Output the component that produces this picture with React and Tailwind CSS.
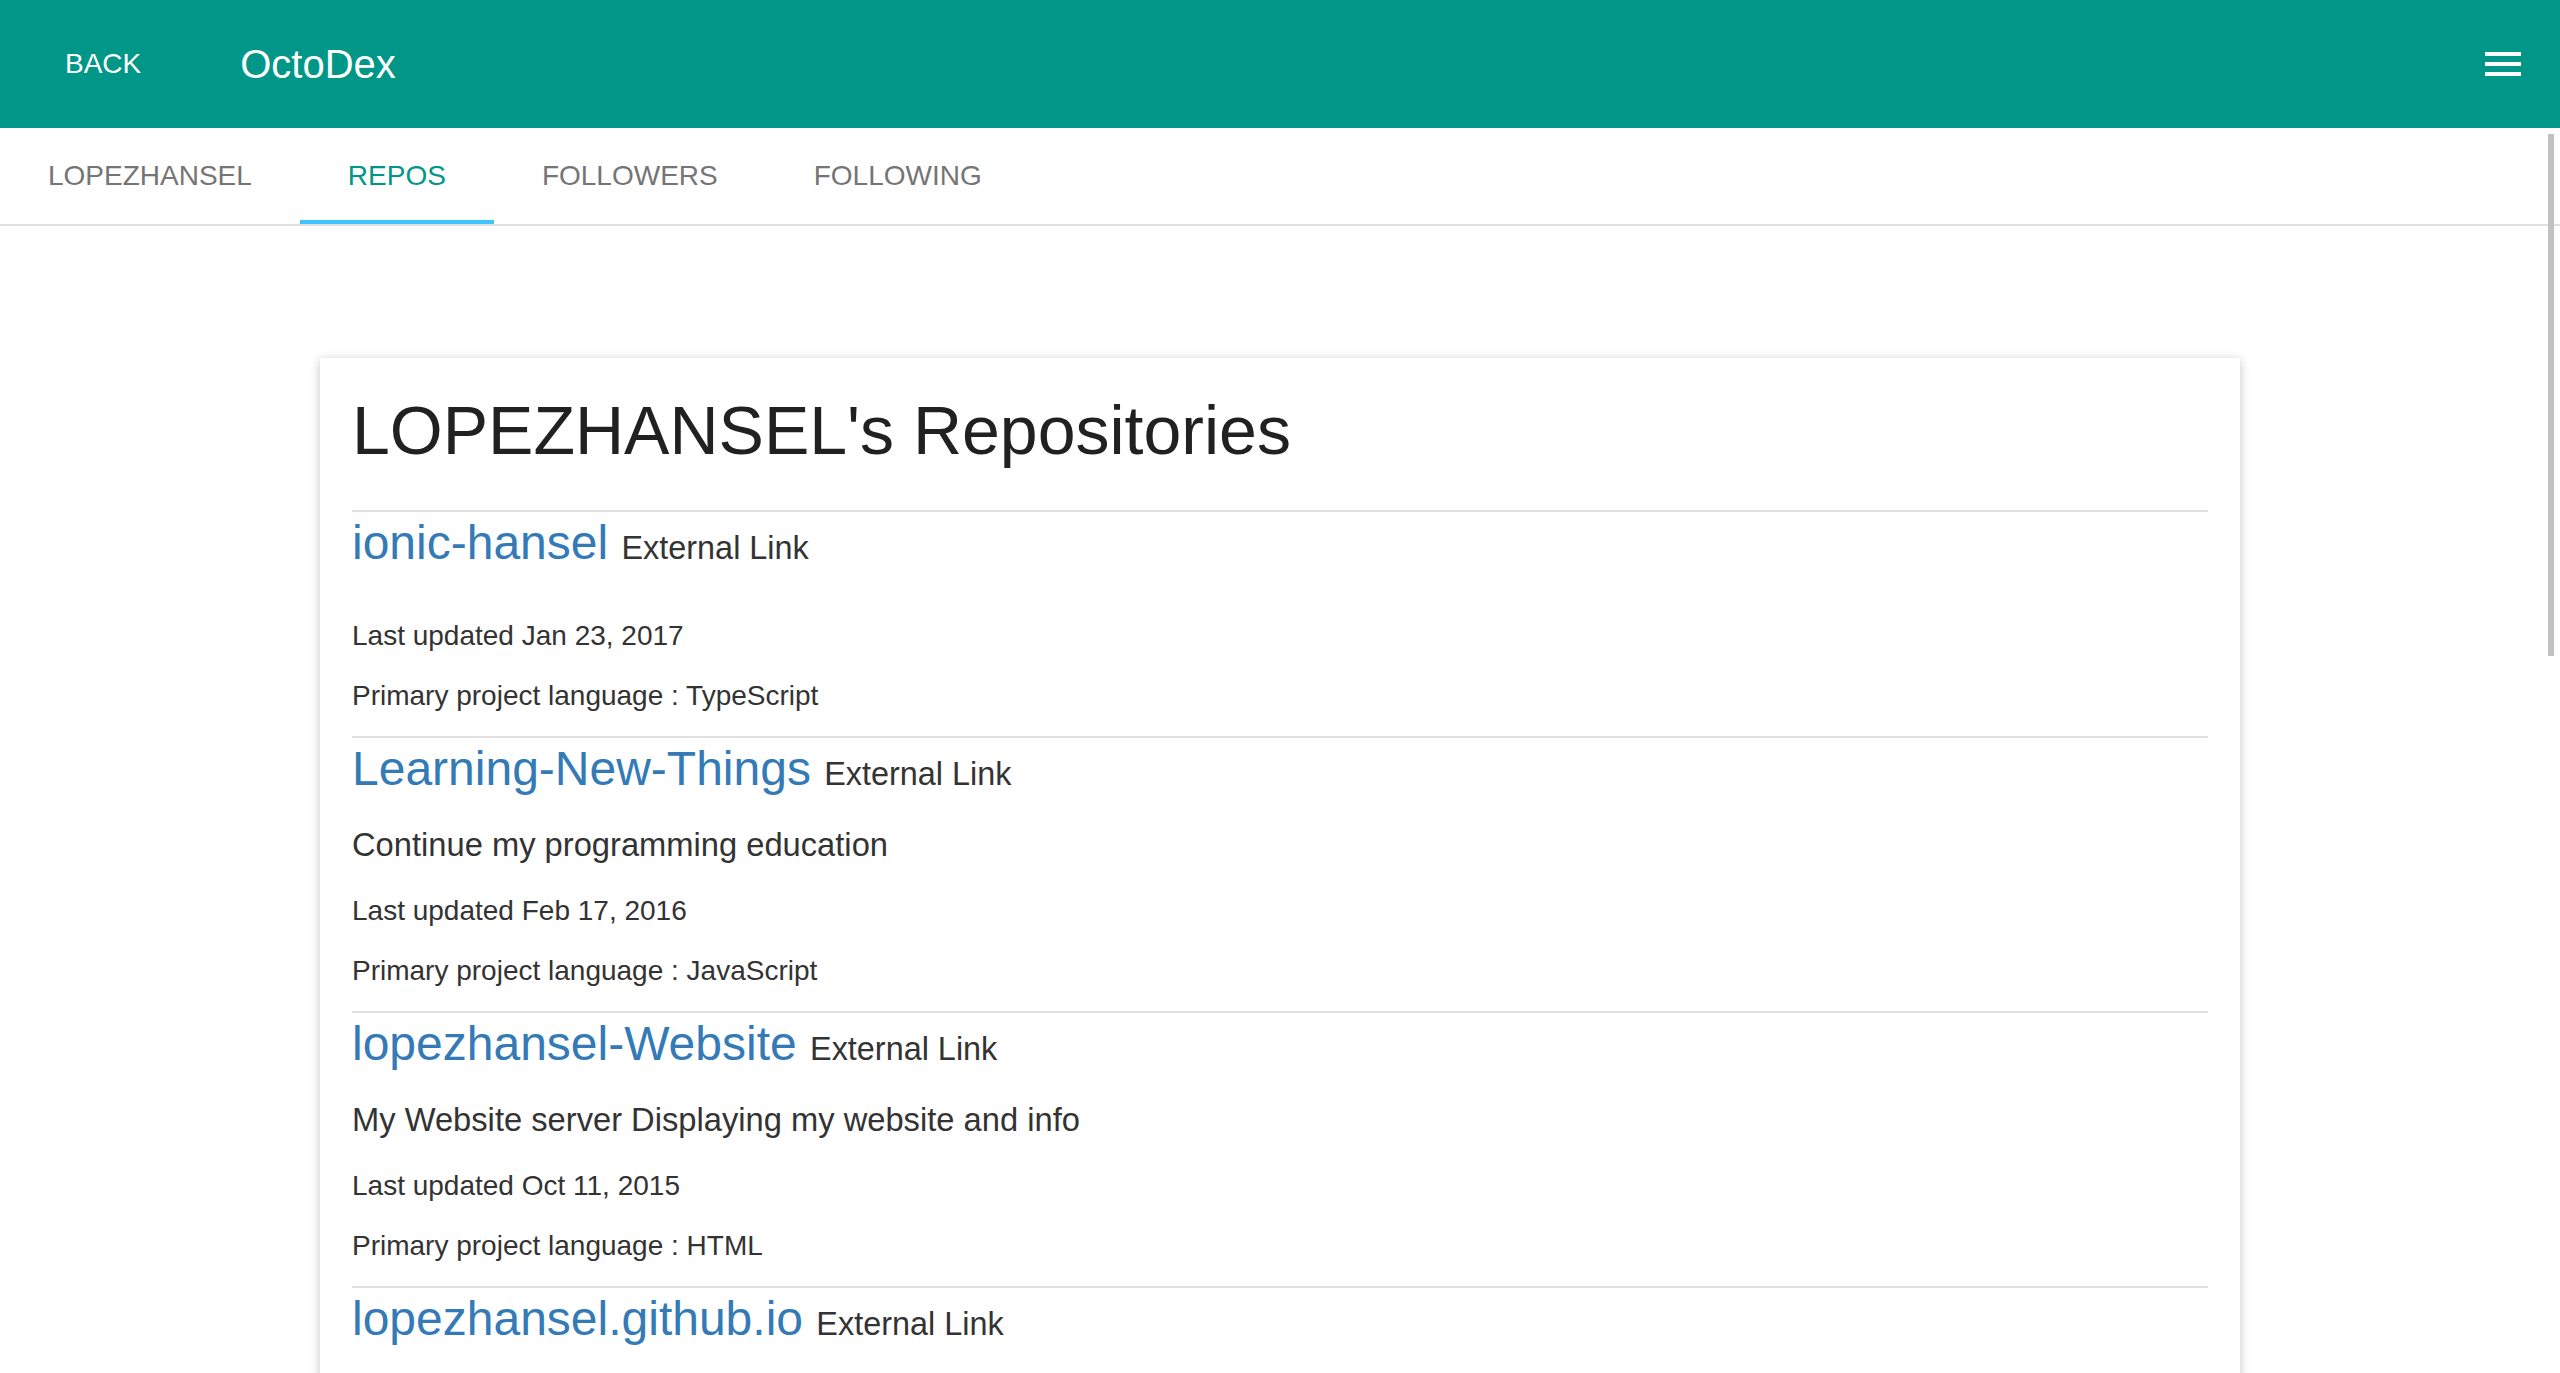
const tabs = ["LOPEZHANSEL", "REPOS", "FOLLOWERS", "FOLLOWING"];

const repos = [
  { name: "ionic-hansel", desc: "", updated: "Jan 23, 2017", lang: "TypeScript" },
  { name: "Learning-New-Things", desc: "Continue my programming education", updated: "Feb 17, 2016", lang: "JavaScript" },
  { name: "lopezhansel-Website", desc: "My Website server Displaying my website and info", updated: "Oct 11, 2015", lang: "HTML" },
  { name: "lopezhansel.github.io", desc: "", updated: "Sep 2, 2015", lang: "CSS" },
];

const Repo = ({ name, desc, updated, lang }) => (
  <div>
    <div className="h-[2px] bg-[#e0e0e0]" />
    <h3 className="mt-[4px] text-[48px] leading-[53px] text-[#337ab7]">
      <a href="#">{name}</a>{" "}
      <span className="text-[32.4px] leading-none text-[#333]">External Link</span>
    </h3>
    {desc ? (
      <>
        <p className="mt-[30px] text-[32.7px] leading-[40px] text-[#333]">{desc}</p>
        <p className="mt-[26px] text-[28px] leading-[40px] text-[#333]">Last updated {updated}</p>
      </>
    ) : (
      <p className="mt-[47px] text-[28px] leading-[40px] text-[#333]">Last updated {updated}</p>
    )}
    <p className="mt-[20px] mb-[20px] text-[28px] leading-[40px] text-[#333]">
      Primary project language : {lang}
    </p>
  </div>
);

const App = () => {
  return (
    <div className="relative h-screen overflow-hidden flex flex-col bg-white font-['Liberation_Sans',Arial,sans-serif]">
      <header className="h-[128px] shrink-0 bg-[#009688] flex items-center text-white">
        <button className="ml-[65px] text-[28px] uppercase">Back</button>
        <h1 className="ml-[99px] text-[40px]">OctoDex</h1>
        <svg viewBox="0 0 24 24" className="ml-auto mr-[33px] w-[48px] h-[48px]" fill="#fff">
          <path d="M3 18h18v-2H3v2zm0-5h18v-2H3v2zm0-7v2h18V6H3z" />
        </svg>
      </header>

      <nav className="h-[98px] shrink-0 flex border-b-2 border-[#e0e0e0]">
        {tabs.map((t) => (
          <div
            key={t}
            className={
              t === "REPOS"
                ? "relative px-[48px] flex items-center text-[28px] text-[#009688]"
                : "relative px-[48px] flex items-center text-[28px] text-[#757575]"
            }
          >
            {t}
            {t === "REPOS" && <div className="absolute left-0 right-0 bottom-0 h-[4px] bg-[#40c4ff]" />}
          </div>
        ))}
      </nav>

      <main className="flex-1 overflow-hidden">
        <div className="mx-auto mt-[132px] w-[1920px] bg-white px-[32px] pt-[35px] pb-[40px] shadow-[0_2px_12px_rgba(0,0,0,0.12),0_2px_8px_rgba(0,0,0,0.12)]">
          <h2 className="text-[68px] leading-[75px] text-[#212121] mb-[42px]">LOPEZHANSEL's Repositories</h2>
          {repos.map((r) => (
            <Repo key={r.name} {...r} />
          ))}
        </div>
      </main>

      <div className="absolute right-[6px] top-[134px] w-[6px] h-[522px] bg-[#c1c1c1]" />
    </div>
  );
};

export default App;
